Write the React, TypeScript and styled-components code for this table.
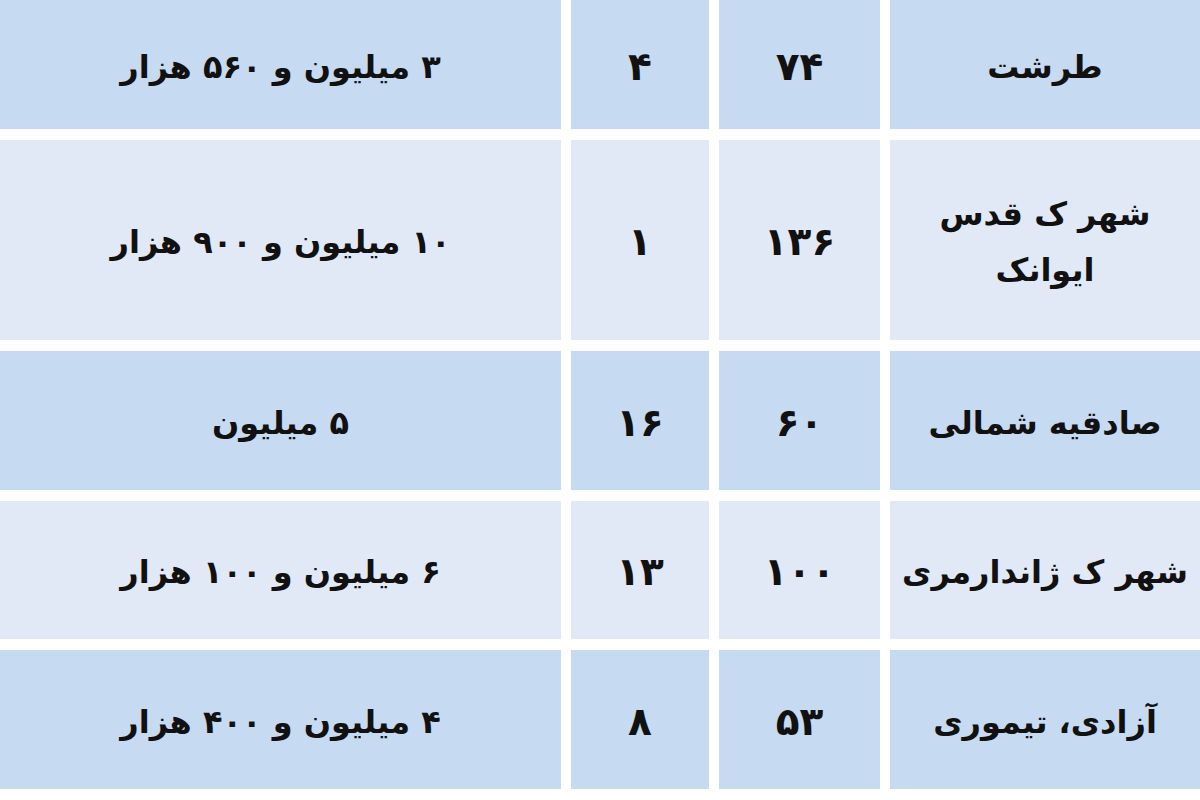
import styled, { createGlobalStyle } from "styled-components";

const GlobalStyle = createGlobalStyle`
    html, body {
        margin: 0;
        padding: 0;
        background: #ffffff;
    }
    body {
        width: 1200px;
        height: 800px;
        overflow: hidden;
        font-family: "DejaVu Sans", "Noto Sans", sans-serif;
    }
`;

const TableStyled = styled.div`
    direction: rtl;
    display: grid;
    grid-template-columns: 310px 161px 138px 1fr;
    column-gap: 10px;
    row-gap: 11px;
    width: 1200px;
    padding-bottom: 11px;
    background: #ffffff;
`;

const CellStyled = styled.div<{ $shade: "dark" | "light"; $height: number; $numeric?: boolean }>`
    height: ${({ $height }) => $height}px;
    background-color: ${({ $shade }) => ($shade === "dark" ? "#c6daf1" : "#e1e9f7")};
    display: flex;
    align-items: center;
    justify-content: center;
    text-align: center;
    color: #111111;
    font-family: "DejaVu Sans", "Noto Sans", sans-serif;
    font-weight: bold;
    font-size: ${({ $numeric }) => ($numeric ? "39px" : "32px")};
    line-height: 56px;
    padding-top: 4px;
    box-sizing: border-box;
    white-space: pre-line;
`;

type Row = {
    place: string;
    area: string;
    age: string;
    price: string;
    height: number;
};

const rows: Row[] = [
    { place: "طرشت", area: "۷۴", age: "۴", price: "۳ میلیون و ۵۶۰ هزار", height: 129 },
    { place: "شهر ک قدس\nایوانک", area: "۱۳۶", age: "۱", price: "۱۰ میلیون و ۹۰۰ هزار", height: 200 },
    { place: "صادقیه شمالی", area: "۶۰", age: "۱۶", price: "۵ میلیون", height: 139 },
    { place: "شهر ک ژاندارمری", area: "۱۰۰", age: "۱۳", price: "۶ میلیون و ۱۰۰ هزار", height: 138 },
    { place: "آزادی، تیموری", area: "۵۳", age: "۸", price: "۴ میلیون و ۴۰۰ هزار", height: 139 },
];

export default function App() {
    return (
        <>
            <GlobalStyle />
            <TableStyled>
                {rows.map((row, i) => {
                    const shade = i % 2 === 0 ? "dark" : "light";
                    return [
                        <CellStyled key={`p${i}`} $shade={shade} $height={row.height}>{row.place}</CellStyled>,
                        <CellStyled key={`a${i}`} $shade={shade} $height={row.height} $numeric>{row.area}</CellStyled>,
                        <CellStyled key={`g${i}`} $shade={shade} $height={row.height} $numeric>{row.age}</CellStyled>,
                        <CellStyled key={`r${i}`} $shade={shade} $height={row.height}>{row.price}</CellStyled>,
                    ];
                })}
            </TableStyled>
        </>
    );
}
